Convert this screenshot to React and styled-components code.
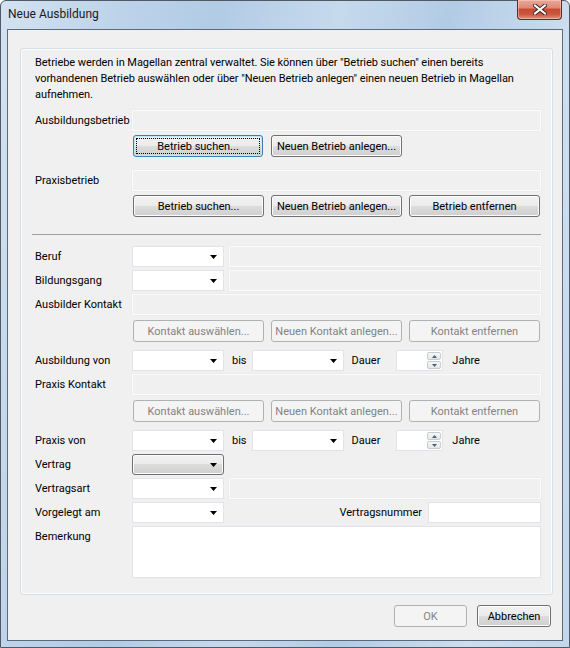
import React from "react";
import styled, { createGlobalStyle, css } from "styled-components";

const GlobalStyle = createGlobalStyle`
  html, body {
    margin: 0;
    padding: 0;
    background: #ffffff;
  }
  body {
    font-family: Roboto, "Liberation Sans", sans-serif;
    font-size: 11px;
    color: #000;
  }
  * {
    box-sizing: border-box;
  }
`;

function Arrow() {
  return (
    <svg width="7" height="4" viewBox="0 0 7 4">
      <path d="M0 0H7L3.5 4Z" fill="#000" />
    </svg>
  );
}

function Combo({ variant }) {
  return (
    <ComboBox $variant={variant}>
      <ArrowSlot>
        <Arrow />
      </ArrowSlot>
    </ComboBox>
  );
}

function Spin() {
  return (
    <SpinBox>
      <SpinInput />
      <SpinButtons>
        <SpinButton>
          <svg width="5" height="3" viewBox="0 0 5 3">
            <path d="M0 3H5L2.5 0Z" fill="#4d6185" />
          </svg>
        </SpinButton>
        <SpinButton>
          <svg width="5" height="3" viewBox="0 0 5 3">
            <path d="M0 0H5L2.5 3Z" fill="#4d6185" />
          </svg>
        </SpinButton>
      </SpinButtons>
    </SpinBox>
  );
}

function DateRow({ label, top }) {
  return (
    <Row $top={top}>
      <Label>{label}</Label>
      <Combo />
      <Inline $left={8}>bis</Inline>
      <ComboGap $left={5}>
        <Combo />
      </ComboGap>
      <Inline $left={8}>Dauer</Inline>
      <ComboGap $left={16}>
        <Spin />
      </ComboGap>
      <Inline $left={9}>Jahre</Inline>
    </Row>
  );
}

function App() {
  return (
    <>
      <GlobalStyle />
      <Window>
        <TitleBar>
          <Title>Neue Ausbildung</Title>
          <CloseButton>
            <svg width="14" height="11" viewBox="0 0 14 11">
              <path
                d="M2 1.5L12 9.5M12 1.5L2 9.5"
                stroke="#3b2a2a"
                strokeWidth="4"
                strokeLinecap="square"
              />
              <path
                d="M2 1.5L12 9.5M12 1.5L2 9.5"
                stroke="#ffffff"
                strokeWidth="2"
                strokeLinecap="square"
              />
            </svg>
          </CloseButton>
        </TitleBar>
        <Client>
          <Panel>
            <Intro>
              Betriebe werden in Magellan zentral verwaltet. Sie können über
              "Betrieb suchen" einen bereits
              <br />
              vorhandenen Betrieb auswählen oder über "Neuen Betrieb anlegen"
              einen neuen Betrieb in Magellan
              <br />
              aufnehmen.
            </Intro>

            <Row $top={7}>
              <Label>Ausbildungsbetrieb</Label>
              <Field />
            </Row>
            <ButtonRow $top={4}>
              <Button $focused>Betrieb suchen...</Button>
              <Button>Neuen Betrieb anlegen...</Button>
            </ButtonRow>

            <Row $top={13}>
              <Label>Praxisbetrieb</Label>
              <Field />
            </Row>
            <ButtonRow $top={4}>
              <Button>Betrieb suchen...</Button>
              <Button>Neuen Betrieb anlegen...</Button>
              <Button>Betrieb entfernen</Button>
            </ButtonRow>

            <Separator />

            <Row $top={11}>
              <Label>Beruf</Label>
              <Combo />
              <Field $left={5} />
            </Row>
            <Row $top={3}>
              <Label>Bildungsgang</Label>
              <Combo />
              <Field $left={5} />
            </Row>
            <Row $top={3}>
              <Label>Ausbilder Kontakt</Label>
              <Field />
            </Row>
            <ButtonRow $top={5}>
              <Button disabled>Kontakt auswählen...</Button>
              <Button disabled>Neuen Kontakt anlegen...</Button>
              <Button disabled>Kontakt entfernen</Button>
            </ButtonRow>

            <DateRow label="Ausbildung von" top={8} />
            <Row $top={3}>
              <Label>Praxis Kontakt</Label>
              <Field />
            </Row>
            <ButtonRow $top={5}>
              <Button disabled>Kontakt auswählen...</Button>
              <Button disabled>Neuen Kontakt anlegen...</Button>
              <Button disabled>Kontakt entfernen</Button>
            </ButtonRow>

            <DateRow label="Praxis von" top={8} />
            <Row $top={3}>
              <Label>Vertrag</Label>
              <Combo variant="button" />
            </Row>
            <Row $top={3}>
              <Label>Vertragsart</Label>
              <Combo />
              <Field $left={5} />
            </Row>
            <Row $top={3}>
              <Label>Vorgelegt am</Label>
              <Combo />
              <RightLabel>Vertragsnummer</RightLabel>
              <Input $width={113} />
            </Row>
            <Row $top={3} $height={52} $alignTop>
              <Label $padTop={4}>Bemerkung</Label>
              <Input />
            </Row>
          </Panel>
          <Footer>
            <Button $width={73} disabled>
              OK
            </Button>
            <Button $width={74}>Abbrechen</Button>
          </Footer>
        </Client>
      </Window>
    </>
  );
}

export default App;

const Window = styled.div`
  width: 570px;
  height: 648px;
  display: flex;
  flex-direction: column;
  border: 1px solid #4f5a66;
  border-radius: 6px 6px 0 0;
  background: linear-gradient(
      100deg,
      rgba(255, 255, 255, 0.35) 0%,
      rgba(255, 255, 255, 0) 18%,
      rgba(120, 160, 200, 0.15) 32%,
      rgba(255, 255, 255, 0.15) 50%,
      rgba(120, 160, 200, 0.15) 66%,
      rgba(255, 255, 255, 0.25) 85%,
      rgba(255, 255, 255, 0.1) 100%
    ),
    #bcd3ea;
`;

const TitleBar = styled.div`
  height: 28px;
  flex-shrink: 0;
  display: flex;
  padding: 0 7px 0 7px;
`;

const Title = styled.div`
  align-self: center;
  margin-top: -2px;
  font-size: 12px;
  color: #1a1a1a;
`;

const CloseButton = styled.div`
  margin-left: auto;
  margin-top: -1px;
  width: 45px;
  height: 20px;
  display: flex;
  align-items: center;
  justify-content: center;
  border: 1px solid #5b2d27;
  border-top: none;
  border-radius: 0 0 4px 4px;
  background: linear-gradient(
    #eaa898 0%,
    #de8a76 40%,
    #c94a32 50%,
    #cc563f 75%,
    #e3907a 100%
  );
  box-shadow: inset 0 0 0 1px rgba(255, 220, 210, 0.45);
`;

const Client = styled.div`
  flex: 1;
  margin: 0 6px 6px 6px;
  border: 1px solid #5c6b7c;
  background: #f0f0f0;
  display: flex;
  flex-direction: column;
  padding: 18px 9px 0 12px;
`;

const Panel = styled.div`
  flex: 1;
  border: 1px solid #d5dfe5;
  border-radius: 3px;
  box-shadow: inset 0 0 0 1px #fbfcfd;
  padding: 6px 11px 0 14px;
  display: flex;
  flex-direction: column;
`;

const Intro = styled.div`
  line-height: 16px;
  white-space: nowrap;
  letter-spacing: -0.05px;
`;

const Row = styled.div`
  display: flex;
  align-items: ${(p) => (p.$alignTop ? "stretch" : "center")};
  height: ${(p) => p.$height || 21}px;
  margin-top: ${(p) => p.$top || 0}px;
`;

const Label = styled.div`
  width: 97px;
  flex-shrink: 0;
  white-space: nowrap;
  padding-top: ${(p) => p.$padTop || 0}px;
`;

const Inline = styled.div`
  margin-left: ${(p) => p.$left}px;
  white-space: nowrap;
`;

const ComboGap = styled.div`
  margin-left: ${(p) => p.$left}px;
  display: flex;
  height: 100%;
`;

const RightLabel = styled.div`
  margin-left: auto;
  margin-right: 6px;
  white-space: nowrap;
`;

const Field = styled.div`
  flex: 1;
  height: 100%;
  margin-left: ${(p) => p.$left || 0}px;
  background: #f0f0f0;
  border: 1px solid #fbfbfb;
  box-shadow: 0 0 0 0.5px #e6e6e6;
`;

const Input = styled.div`
  ${(p) =>
    p.$width
      ? css`
          width: ${p.$width}px;
        `
      : css`
          flex: 1;
        `}
  height: 100%;
  background: #ffffff;
  border: 1px solid #e2e3ea;
`;

const ComboBox = styled.div`
  width: 92px;
  height: 100%;
  display: flex;
  align-items: center;
  justify-content: flex-end;
  ${(p) =>
    p.$variant === "button"
      ? css`
          border: 1px solid #707070;
          border-radius: 3px;
          background: linear-gradient(
            #f2f2f2 0%,
            #ebebeb 50%,
            #dddddd 50%,
            #cfcfcf 100%
          );
          box-shadow: inset 0 0 0 1px #fafafa;
        `
      : css`
          border: 1px solid #e2e3ea;
          background: #ffffff;
        `}
`;

const ArrowSlot = styled.div`
  width: 17px;
  display: flex;
  justify-content: center;
  margin-right: 1px;
`;

const SpinBox = styled.div`
  width: 47px;
  height: 100%;
  display: flex;
  background: #ffffff;
  border: 1px solid #e2e3ea;
`;

const SpinInput = styled.div`
  flex: 1;
`;

const SpinButtons = styled.div`
  width: 15px;
  display: flex;
  flex-direction: column;
  padding: 1px 1px 1px 0;
  gap: 1px;
`;

const SpinButton = styled.div`
  flex: 1;
  display: flex;
  align-items: center;
  justify-content: center;
  border: 1px solid #c5cad3;
  border-radius: 2px;
  background: linear-gradient(#f7f7f7, #e6e6e6);
`;

const ButtonRow = styled.div`
  display: flex;
  gap: 7px;
  padding-left: 98px;
  margin-top: ${(p) => p.$top || 0}px;
`;

const Button = styled.button`
  position: relative;
  width: ${(p) => p.$width || 131}px;
  height: 22px;
  padding: 0;
  font-family: Roboto, "Liberation Sans", sans-serif;
  font-size: 11px;
  color: #000;
  border: 1px solid #707070;
  border-radius: 3px;
  background: linear-gradient(
    #f2f2f2 0%,
    #ebebeb 50%,
    #dddddd 50%,
    #cfcfcf 100%
  );
  box-shadow: inset 0 0 0 1px #fcfcfc;
  white-space: nowrap;

  ${(p) =>
    p.$focused &&
    css`
      width: 130px;
      margin-right: 1px;
      border-color: #3c7fb1;
      box-shadow: inset 0 0 0 1px #bfe8fb;
      &::after {
        content: "";
        position: absolute;
        inset: 2px;
        border: 1px dotted #000;
      }
    `}

  &:disabled {
    color: #838383;
    border-color: #adb2b5;
    background: #f4f4f4;
    box-shadow: none;
  }
`;

const Separator = styled.div`
  height: 1px;
  margin: 17px 0 0 -3px;
  background: #a0a0a0;
`;

const Footer = styled.div`
  height: 45px;
  flex-shrink: 0;
  display: flex;
  justify-content: flex-end;
  align-items: flex-start;
  gap: 10px;
  padding: 10px 2px 0 0;
`;
